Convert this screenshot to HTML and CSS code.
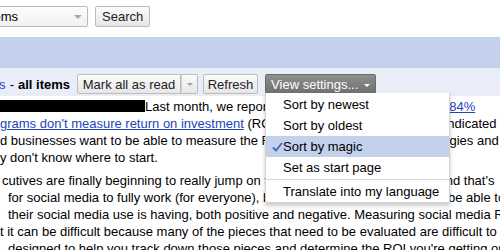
FILE: index.html
```html
<!DOCTYPE html>
<html lang="en">
<head>
    <meta charset="UTF-8">
    <title>Reader - all items</title>
    <link rel="stylesheet" href="styles.css">
</head>
<body>
    <div class="search-row">
        <div class="scope-select">
            <span>All items</span>
            <span class="select-arrow"></span>
        </div>
        <button class="btn">Search</button>
    </div>

    <div class="title-bar"></div>

    <div class="toolbar">
        <div class="feed-title"><a href="#">Social media blogs</a> - <b>all items</b></div>
        <div class="btn-group">
            <button class="btn btn-mark">Mark all as read</button>
            <button class="btn btn-arrow"><span class="caret"></span></button>
        </div>
        <button class="btn btn-refresh">Refresh</button>
        <button class="btn btn-dark">View settings... <span class="caret caret-white"></span></button>
    </div>

    <div class="entry">
        <p>
            <span class="line"><span class="redacted"></span>Last month, we reported that a survey found roughly <a href="#">84%</a></span>
            <span class="line"><a href="#">grams don't measure return on investment</a> (ROI). The same study also firmly indicated t</span>
            <span class="line">d businesses want to be able to measure the ROI of all the social media strategies and</span>
            <span class="line">y don't know where to start.</span>
        </p>
        <p>
            <span class="line first">cutives are finally beginning to really jump on this social media bandwagon, and that's</span>
            <span class="line indent">for social media to fully work (for everyone), businesses themselves need to be able to</span>
            <span class="line indent">their social media use is having, both positive and negative. Measuring social media ROI</span>
            <span class="line">t it can be difficult because many of the pieces that need to be evaluated are difficult to</span>
            <span class="line indent">designed to help you track down those pieces and determine the ROI you're getting on</span>
        </p>
    </div>

    <ul class="menu">
        <li>Sort by newest</li>
        <li>Sort by oldest</li>
        <li class="checked">
            <svg class="check" width="11" height="10" viewBox="0 0 11 10"><path d="M1 5.5 L4 8.5 L10 1" fill="none" stroke="#3b63b8" stroke-width="1.8"/></svg>
            Sort by magic
        </li>
        <li>Set as start page</li>
        <li class="separator"></li>
        <li>Translate into my language</li>
    </ul>
</body>
</html>
```

FILE: styles.css
```css
body {
    margin: 0;
    width: 500px;
    height: 250px;
    overflow: hidden;
    font-family: "Liberation Sans", Arial, sans-serif;
    font-size: 13px;
    color: #000;
    background-color: #fff;
    position: relative;
}
.search-row {
    display: flex;
    align-items: center;
    gap: 7px;
    height: 37px;
    box-sizing: border-box;
    padding-bottom: 4px;
}
.scope-select {
    display: flex;
    align-items: center;
    justify-content: space-between;
    width: 124px;
    height: 21px;
    margin-left: -36px;
    padding: 0 5px 0 4px;
    box-sizing: border-box;
    border: 1px solid #b9b9b9;
    border-radius: 2px;
    background: linear-gradient(#fdfdfd, #f1f1f1);
}
.select-arrow {
    width: 0;
    height: 0;
    border-left: 4px solid transparent;
    border-right: 4px solid transparent;
    border-top: 4px solid #a8a8a8;
}
.btn {
    font-family: "Liberation Sans", Arial, sans-serif;
    font-size: 13px;
    color: #222;
    height: 21px;
    padding: 0 6px;
    border: 1px solid #bcbcbc;
    border-radius: 2px;
    background: linear-gradient(#fbfbfb, #e6e6e6);
    cursor: pointer;
    box-sizing: border-box;
}
.title-bar {
    height: 31px;
    background-color: #c3d1ec;
}
.toolbar {
    display: flex;
    align-items: flex-start;
    height: 28px;
    box-sizing: border-box;
    padding-top: 6px;
    background-color: #e8edf8;
}
.feed-title {
    display: flex;
    justify-content: flex-end;
    align-items: center;
    width: 70px;
    height: 20px;
    white-space: nowrap;
    margin-right: 7px;
}
.feed-title a {
    color: #2244bb;
    text-decoration: none;
    margin-right: 4px;
}
.feed-title b {
    margin-left: 4px;
}
.toolbar .btn {
    height: 20px;
    padding: 0;
}
.btn-group {
    display: flex;
    margin-right: 5px;
}
.btn-mark {
    width: 104px;
    border-radius: 2px 0 0 2px;
}
.btn-arrow {
    width: 17px;
    border-left: 1px solid #cfcfcf;
    border-radius: 0 2px 2px 0;
    display: flex;
    align-items: center;
    justify-content: center;
}
.btn-refresh {
    width: 55px;
    margin-right: 7px;
}
.caret {
    display: inline-block;
    width: 0;
    height: 0;
    border-left: 3px solid transparent;
    border-right: 3px solid transparent;
    border-top: 3px solid #a0a0a0;
    vertical-align: middle;
}
.btn-dark {
    width: 111px;
    color: #fff;
    border-color: #6a6a6a;
    background: linear-gradient(#8f8f8f, #6f6f6f);
}
.caret-white {
    border-top-color: #fff;
    margin-left: 2px;
}
.entry {
    padding-top: 2px;
    line-height: 17px;
}
.entry p {
    margin: 0 0 6px;
}
.line {
    display: block;
    white-space: nowrap;
}
.first {
    padding-left: 2px;
}
.indent {
    padding-left: 8px;
}
.entry a {
    color: #2244bb;
}
.redacted {
    display: inline-block;
    width: 145px;
    height: 12px;
    background-color: #000;
    vertical-align: -1px;
}
.menu {
    position: absolute;
    top: 93px;
    left: 265px;
    width: 183px;
    margin: 0;
    padding: 1px 0 0;
    list-style: none;
    background-color: #fff;
    border: 1px solid #d2d2d2;
    border-top: none;
    box-shadow: 0 3px 4px rgba(0,0,0,0.2);
}
.menu li {
    position: relative;
    height: 21px;
    line-height: 21px;
    padding-left: 17px;
}
.menu li.checked {
    background-color: #c3d1ec;
}
.menu .check {
    position: absolute;
    left: 6px;
    top: 6px;
}
.menu li.separator {
    height: 1px;
    margin: 1px 0;
    padding: 0;
    background-color: #d6d6d6;
}
```
